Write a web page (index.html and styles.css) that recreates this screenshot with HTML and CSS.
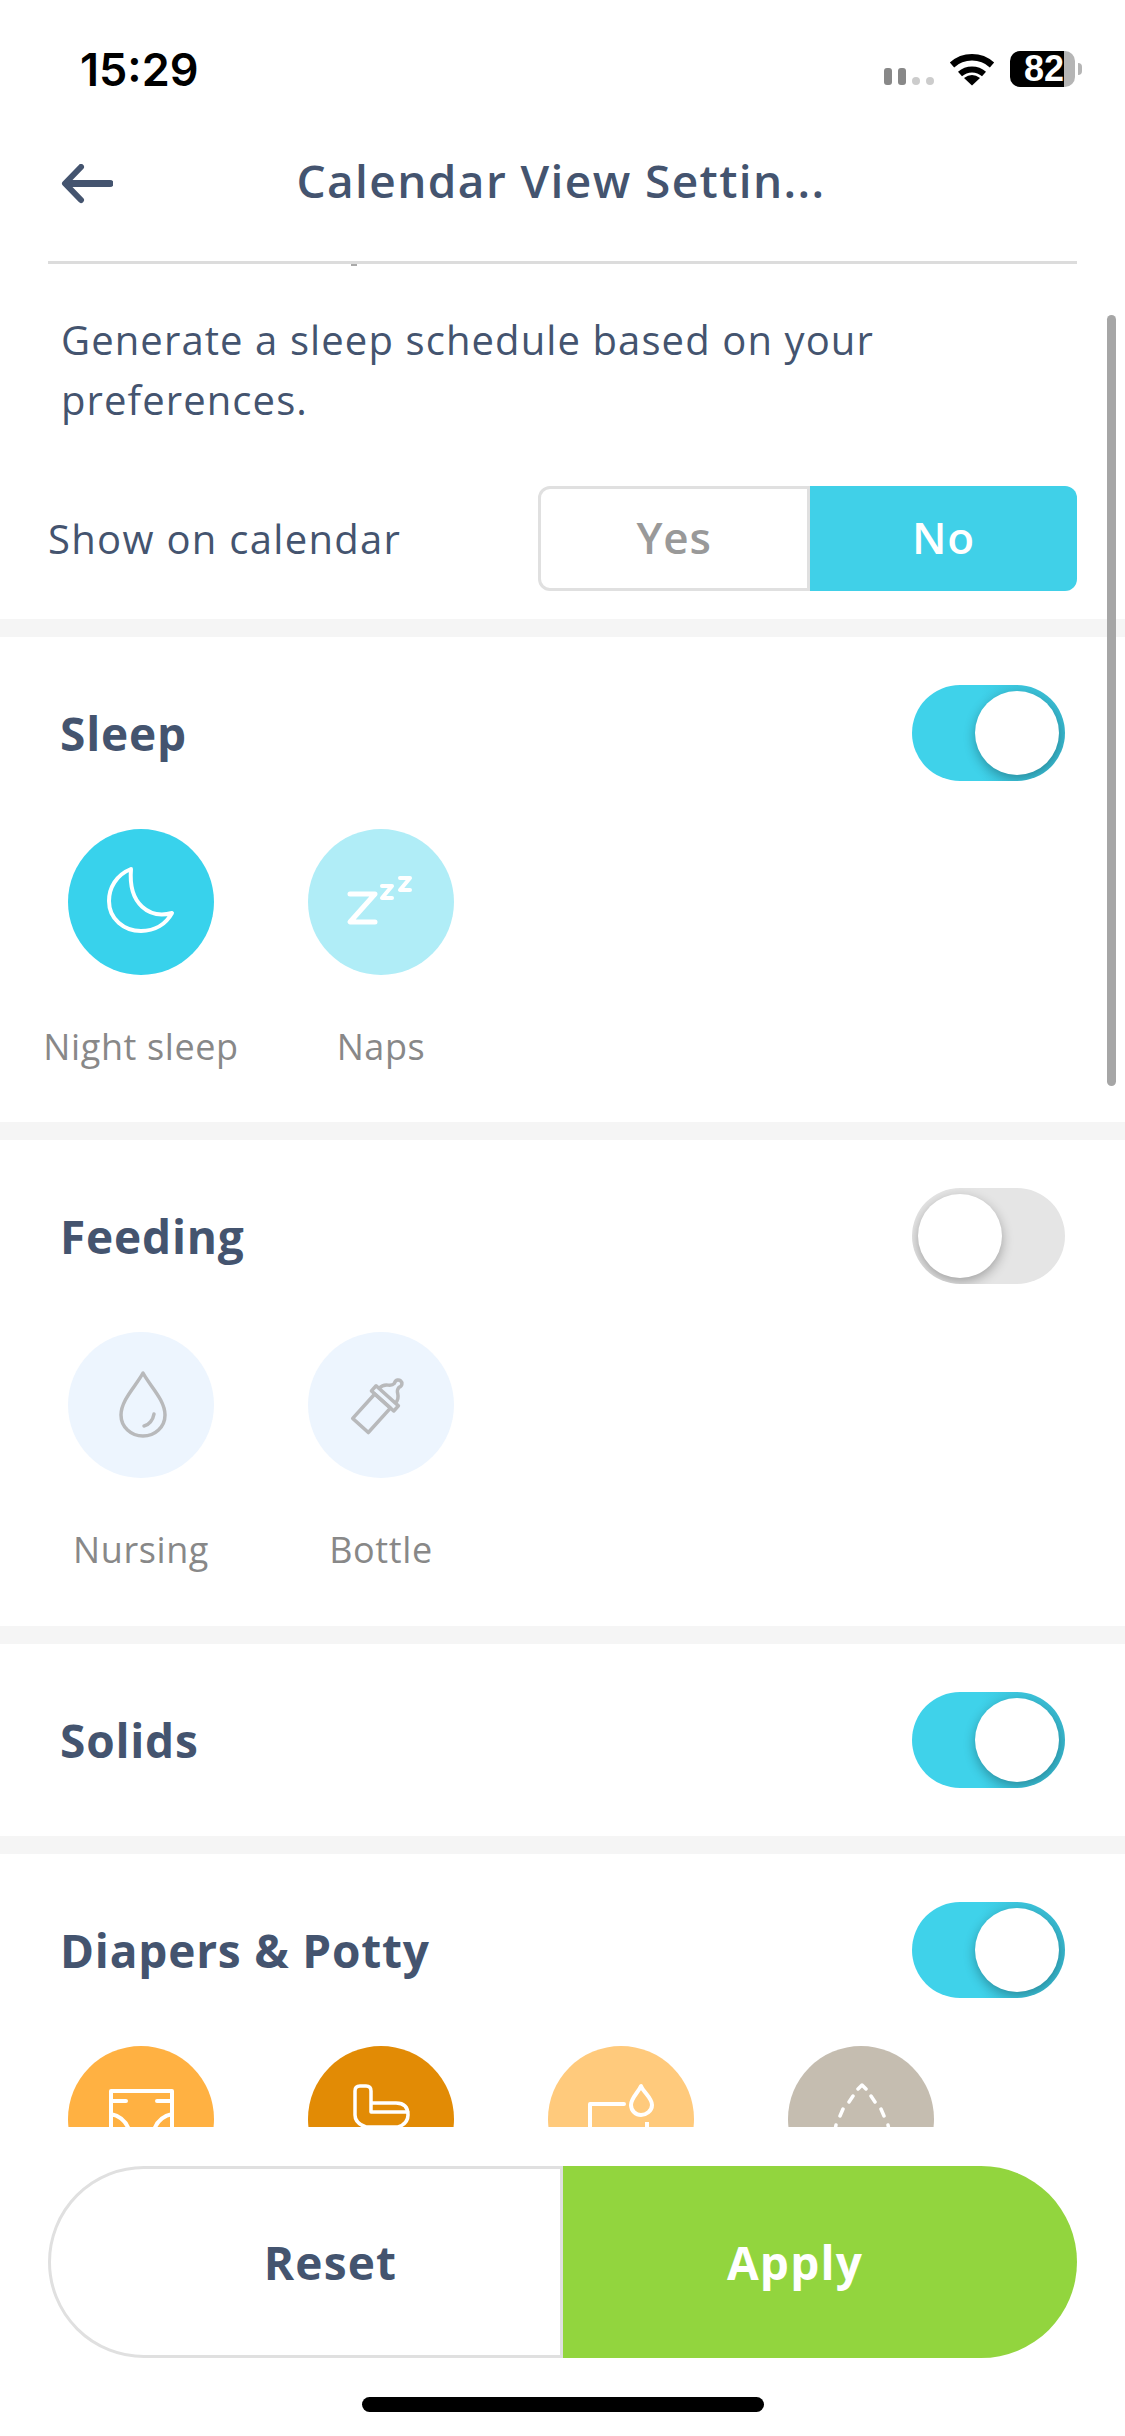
FILE: index.html
```html
<!DOCTYPE html>
<html lang="en">

<head>
    <meta charset="UTF-8">
    <meta name="viewport" content="width=device-width, initial-scale=1.0">
    <title>Calendar View Settings</title>
    <link rel="stylesheet" href="styles.css">
</head>

<body>
    <div class="screen">
        <div class="status-bar">
            <span class="time">15:29</span>
            <div class="status-icons">
                <div class="signal">
                    <span class="bar"></span><span class="bar"></span>
                    <span class="bar off"></span><span class="bar off"></span>
                </div>
                <svg class="wifi" width="46" height="34" viewBox="0 0 46 34">
                    <path d="M3 13 A30 30 0 0 1 43 13" fill="none" stroke="#000" stroke-width="6.5" />
                    <path d="M11 22 A18 18 0 0 1 35 22" fill="none" stroke="#000" stroke-width="6" />
                    <path d="M23 33.500 L15 26 Q23 20 31 26 Z" fill="#000" />
                </svg>
                <div class="battery">
                    <div class="battery-body"><span class="battery-level">82</span></div>
                    <span class="battery-tip"></span>
                </div>
            </div>
        </div>

        <div class="nav">
            <div class="nav-inner">
                <svg class="back" width="52" height="40" viewBox="0 0 52 40">
                    <path d="M49 19.500 H8" fill="none" stroke="#44546f" stroke-width="7" stroke-linecap="round" />
                    <path d="M20 3 L4 19.500 L20 36" fill="none" stroke="#44546f" stroke-width="6" stroke-linecap="round" stroke-linejoin="round" />
                </svg>
                <h1 class="title">Calendar View Settin...</h1>
            </div>
        </div>

        <div class="content">
            <div class="scrollbar"></div>

            <section class="section intro">
                <p class="intro-text">Generate a sleep schedule based on your preferences.</p>
                <div class="show-row">
                    <span class="show-label">Show on calendar</span>
                    <div class="segmented">
                        <div class="seg seg-yes">Yes</div>
                        <div class="seg seg-no">No</div>
                    </div>
                </div>
            </section>

            <section class="section">
                <div class="section-head">
                    <h2>Sleep</h2>
                    <div class="toggle on"><span class="knob"></span></div>
                </div>
                <div class="options">
                    <div class="option">
                        <div class="circle night">
                            <svg width="146" height="146" viewBox="0 0 146 146">
                                <path d="M63 40 C48 46 41 59 41 72 C41 90 56 102 73 102 C87 102 98 95 104 84 C82 90 60 76 63 40 Z" fill="none" stroke="#fff" stroke-width="4" stroke-linejoin="round" />
                            </svg>
                        </div>
                        <span class="option-label">Night sleep</span>
                    </div>
                    <div class="option">
                        <div class="circle naps">
                            <svg width="146" height="146" viewBox="0 0 146 146">
                                <path d="M42 65 H67 L42 93 H67" fill="none" stroke="#fff" stroke-width="5" stroke-linecap="round" stroke-linejoin="round" />
                                <path d="M74 57 H84 L74 69 H84" fill="none" stroke="#fff" stroke-width="4" stroke-linecap="round" stroke-linejoin="round" />
                                <path d="M92 49 H102 L92 61 H102" fill="none" stroke="#fff" stroke-width="4" stroke-linecap="round" stroke-linejoin="round" />
                            </svg>
                        </div>
                        <span class="option-label">Naps</span>
                    </div>
                </div>
            </section>

            <section class="section feeding">
                <div class="section-head">
                    <h2>Feeding</h2>
                    <div class="toggle off"><span class="knob"></span></div>
                </div>
                <div class="options">
                    <div class="option">
                        <div class="circle muted">
                            <svg width="146" height="146" viewBox="0 0 146 146">
                                <path d="M75 41 C68 54 53 68 53 83 C53 95 63 104 75 104 C87 104 97 95 97 83 C97 68 82 54 75 41 Z" fill="none" stroke="#b8b9bb" stroke-width="3.500" stroke-linejoin="round" />
                                <path d="M76 94 C81 93 85 88 86 82" fill="none" stroke="#b8b9bb" stroke-width="3.500" stroke-linecap="round" />
                            </svg>
                        </div>
                        <span class="option-label">Nursing</span>
                    </div>
                    <div class="option">
                        <div class="circle muted">
                            <svg width="146" height="146" viewBox="0 0 146 146">
                                <g transform="translate(52.500 93.500) rotate(42)" fill="none" stroke="#b8b9bb" stroke-width="3.500" stroke-linejoin="round">
                                    <path d="M-10.500 0 H10.500 V-33 H-10.500 Z" />
                                    <path d="M-15 -33 H15 V-40 H-15 Z" />
                                    <path d="M-11 -40 C-11 -50 -3 -47 -3 -54 C-5 -58 -2 -60 0 -60 C2 -60 5 -58 3 -54 C3 -47 11 -50 11 -40" />
                                </g>
                            </svg>
                        </div>
                        <span class="option-label">Bottle</span>
                    </div>
                </div>
            </section>

            <section class="section solids">
                <div class="section-head">
                    <h2>Solids</h2>
                    <div class="toggle on"><span class="knob"></span></div>
                </div>
            </section>

            <section class="section">
                <div class="section-head">
                    <h2>Diapers &amp; Potty</h2>
                    <div class="toggle on"><span class="knob"></span></div>
                </div>
                <div class="options">
                    <div class="option">
                        <div class="circle diaper">
                            <svg width="146" height="146" viewBox="0 0 146 146">
                                <path d="M43 90 V45 H104 V90 M43 55 H58 M89 55 H104 M43 68 C52 70 58 75 61 84 M104 68 C95 70 89 75 86 84" fill="none" stroke="#fff" stroke-width="4" stroke-linecap="round" stroke-linejoin="round" />
                            </svg>
                        </div>
                    </div>
                    <div class="option">
                        <div class="circle potty">
                            <svg width="146" height="146" viewBox="0 0 146 146">
                                <path d="M47 69 V45 Q47 40 52 40 H58 Q63 40 63 45 V66 H100 M63 57 H88 Q100 57 100 69 C100 75 96 79 90 81 H58 C52 79 47 75 47 69" fill="none" stroke="#fff" stroke-width="3.500" stroke-linecap="round" stroke-linejoin="round" />
                            </svg>
                        </div>
                    </div>
                    <div class="option">
                        <div class="circle wet">
                            <svg width="146" height="146" viewBox="0 0 146 146">
                                <path d="M42 95 V58 H76" fill="none" stroke="#fff" stroke-width="4" stroke-linecap="round" stroke-linejoin="round" />
                                <path d="M93 40 C90 47 83 52 83 59 C83 65 88 69 93 69 C98 69 104 65 104 59 C104 52 96 47 93 40 Z" fill="none" stroke="#fff" stroke-width="4" stroke-linejoin="round" />
                                <path d="M99 76 V95" fill="none" stroke="#fff" stroke-width="4" />
                            </svg>
                        </div>
                    </div>
                    <div class="option">
                        <div class="circle dry">
                            <svg width="146" height="146" viewBox="0 0 146 146">
                                <path d="M70 43 L74 39 L78 43 M65 50 L61 56 M55 63 L52 70 M48 79 L47 84 M83 50 L87 56 M93 63 L96 70 M100 79 L101 84" fill="none" stroke="#fff" stroke-width="3.500" stroke-linecap="round" stroke-linejoin="round" />
                            </svg>
                        </div>
                    </div>
                </div>
            </section>
        </div>

        <div class="footer">
            <div class="actions">
                <div class="btn btn-reset">Reset</div>
                <div class="btn btn-apply">Apply</div>
            </div>
            <div class="home-bar"></div>
        </div>
    </div>
</body>

</html>
```

FILE: styles.css
```css
body {
    margin: 0;
    background: #fff;
    font-family: "Open Sans", "Noto Sans", sans-serif;
    color: #44546f;
}

h1,
h2,
p {
    margin: 0;
}

.screen {
    width: 1125px;
    height: 2436px;
    display: flex;
    flex-direction: column;
    overflow: hidden;
}

/* status bar */
.status-bar {
    height: 105px;
    flex-shrink: 0;
    display: flex;
    justify-content: space-between;
    padding: 47px 43px 0 80px;
    box-sizing: border-box;
}

.time {
    padding-top: 2px;
    font-family: "Inter", sans-serif;
    font-size: 45px;
    font-weight: 600;
    line-height: 42px;
    color: #000;
}

.status-icons {
    display: flex;
    align-items: flex-start;
    padding-top: 4px;
}

.signal {
    display: flex;
    align-items: flex-end;
    gap: 6px;
    height: 17px;
    margin-top: 17px;
    margin-right: 15px;
}

.bar {
    width: 8px;
    height: 17px;
    border-radius: 3px;
    background: #888;
}

.bar.off {
    height: 8px;
    border-radius: 4px;
    background: #ccc;
}

.wifi {
    margin-top: 1px;
    margin-right: 15px;
}

.battery {
    display: flex;
    align-items: center;
}

.battery-body {
    width: 65px;
    height: 36px;
    border-radius: 10px;
    background: linear-gradient(to right, #000 54px, #b5b5b5 54px);
}

.battery-level {
    display: block;
    width: 54px;
    font-family: "Liberation Sans", sans-serif;
    font-size: 36px;
    font-weight: 700;
    line-height: 36px;
    text-align: right;
    color: #fff;
}

.battery-tip {
    width: 4px;
    height: 12px;
    margin-left: 3px;
    border-radius: 0 6px 6px 0;
    background: #b5b5b5;
}

/* nav */
.nav {
    height: 159px;
    flex-shrink: 0;
    padding: 0 48px;
}

.nav-inner {
    height: 156px;
    display: grid;
    grid-template-columns: 1fr auto 1fr;
    align-items: center;
    border-bottom: 3px solid #dcdcdc;
}

.back {
    margin-left: 13px;
}

.title {
    margin-bottom: 8px;
    margin-right: 3px;
    font-size: 46px;
    font-weight: 600;
    line-height: 150px;
    letter-spacing: 1.4px;
    white-space: nowrap;
}

/* scrolling content */
.content {
    position: relative;
    flex: 1;
    min-height: 0;
    overflow: hidden;
    background: #f5f5f5;
}

.content::before {
    content: "";
    position: absolute;
    top: 0;
    left: 351px;
    width: 6px;
    height: 2px;
    background: #aaa;
}

.scrollbar {
    position: absolute;
    top: 51px;
    right: 9px;
    width: 9px;
    height: 771px;
    border-radius: 5px;
    background: #a6a6a6;
}

.section {
    background: #fff;
    padding: 48px 0 0;
    height: 485px;
    box-sizing: border-box;
    margin-bottom: 18px;
}

.intro {
    height: 355px;
    padding: 46px 48px 0;
}

.feeding {
    height: 486px;
}

.solids {
    height: 192px;
}

.intro-text {
    padding: 0 100px 0 13px;
    font-size: 40px;
    line-height: 60px;
    letter-spacing: 1.1px;
}

.show-row {
    display: flex;
    justify-content: space-between;
    align-items: center;
    margin-top: 56px;
}

.show-label {
    font-size: 40px;
    letter-spacing: 1.3px;
}

.segmented {
    display: flex;
    height: 105px;
    font-size: 44px;
    font-weight: 600;
    letter-spacing: 0.8px;
}

.seg {
    box-sizing: border-box;
    display: flex;
    justify-content: center;
    align-items: center;
    padding-bottom: 3px;
}

.seg-yes {
    width: 272px;
    border: 3px solid #e0e0e0;
    border-radius: 12px 0 0 12px;
    color: #999;
}

.seg-no {
    width: 267px;
    border-radius: 0 12px 12px 0;
    background: #40d0e8;
    color: #fff;
}

.section-head {
    display: flex;
    justify-content: space-between;
    align-items: center;
    height: 96px;
    padding: 0 60px 0 60px;
}

.section-head h2 {
    font-size: 46px;
    font-weight: 700;
    letter-spacing: 0.8px;
}

/* toggles */
.toggle {
    width: 153px;
    height: 96px;
    border-radius: 48px;
    overflow: hidden;
    display: flex;
    align-items: center;
    padding: 0 6px;
    box-sizing: border-box;
}

.toggle.on {
    justify-content: flex-end;
    background: linear-gradient(to right, #3fd2ea 45%, #38b9d0);
}

.toggle.off {
    justify-content: flex-start;
    background: #e5e5e5;
}

.knob {
    width: 84px;
    height: 84px;
    border-radius: 50%;
    background: #fff;
    box-shadow: 0 4px 12px rgba(0, 0, 0, 0.3);
}

/* option circles */
.options {
    display: flex;
    gap: 94px;
    padding: 48px 0 0 68px;
}

.option {
    width: 146px;
    display: flex;
    flex-direction: column;
    align-items: center;
}

.circle {
    width: 146px;
    height: 146px;
    flex-shrink: 0;
    border-radius: 50%;
}

.circle svg {
    display: block;
}

.night {
    background: #38d2ec;
}

.naps {
    background: #b0edf7;
}

.muted {
    background: #edf5fe;
}

.diaper {
    background: #ffb142;
}

.potty {
    background: #e28b05;
}

.wet {
    background: #ffca7c;
}

.dry {
    background: #c5bdb0;
}

.option-label {
    margin-top: 50px;
    font-size: 36px;
    line-height: 44px;
    letter-spacing: 0.6px;
    color: #888;
    white-space: nowrap;
}

/* footer */
.footer {
    height: 309px;
    flex-shrink: 0;
    padding: 39px 48px 0;
    box-sizing: border-box;
    background: #fff;
}

.actions {
    display: flex;
    height: 192px;
    font-size: 46px;
    font-weight: 700;
    letter-spacing: 1.2px;
}

.btn {
    display: flex;
    justify-content: center;
    align-items: center;
    box-sizing: border-box;
}

.btn-reset {
    width: 515px;
    padding-left: 50px;
    border: 3px solid #e0e0e0;
    border-radius: 96px 0 0 96px;
}

.btn-apply {
    width: 514px;
    padding-right: 50px;
    border-radius: 0 96px 96px 0;
    background: #92d53e;
    color: #fff;
}

.home-bar {
    width: 402px;
    height: 15px;
    margin: 39px auto 0;
    border-radius: 8px;
    background: #000;
}
```
